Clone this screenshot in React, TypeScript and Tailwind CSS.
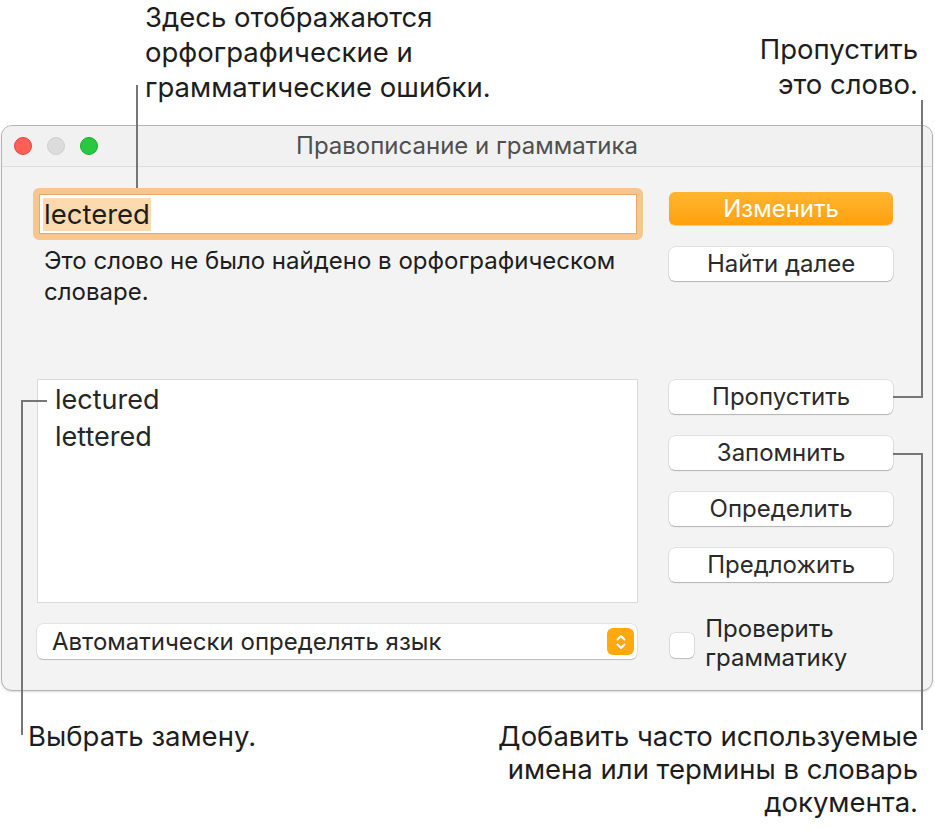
import React from "react"

const font = { fontFamily: "Inter, 'Noto Sans', sans-serif" }

function Btn({ label, primary = false }: { label: string; primary?: boolean }) {
  if (primary) {
    return (
      <div className="h-[33px] w-full rounded-[6px] bg-gradient-to-b from-[#ffb52e] to-[#ffa10a] flex items-center justify-center text-[24px] text-white shadow-[0_1px_1px_rgba(0,0,0,0.15)]">
        {label}
      </div>
    )
  }
  return (
    <div className="h-[34px] w-full rounded-[6px] bg-white flex items-center justify-center text-[24px] text-[#2b2b2b] shadow-[0_0_0_0.5px_rgba(0,0,0,0.15),0_1px_1px_rgba(0,0,0,0.2)]">
      {label}
    </div>
  )
}

export default function App() {
  return (
    <div className="relative w-[935px] h-[830px] bg-white text-[#1d1d1d]" style={font}>
      {/* top callouts */}
      <div className="flex h-[125px]">
        <div className="ml-[145px] text-[27.5px] leading-[35px] text-[#1d1d1d]">
          Здесь отображаются<br />
          орфографические и<br />
          грамматические ошибки.
        </div>
        <div className="ml-auto mr-[17px] mt-[32px] text-right text-[27.5px] leading-[35px]">
          Пропустить<br />
          это слово.
        </div>
      </div>

      {/* window */}
      <div className="ml-[1px] w-[932px] h-[566px] rounded-[11px] border border-[#b4b4b4] bg-[#f3f3f3] overflow-hidden shadow-[0_1px_2px_rgba(0,0,0,0.15)]">
        <div className="relative h-[41px] flex items-center border-b border-[#dcdcdc] bg-[#f1f1f1]">
          <div className="flex gap-[15px] ml-[12px]">
            <span className="w-[18px] h-[18px] rounded-full bg-[#fe5f57] border border-[#e2463f]" />
            <span className="w-[18px] h-[18px] rounded-full bg-[#dcdcdc] border border-[#cfcfcf]" />
            <span className="w-[18px] h-[18px] rounded-full bg-[#28c840] border border-[#1aab29]" />
          </div>
          <div className="absolute inset-0 flex items-center justify-center text-[24px] text-[#4f4f4f]">
            Правописание и грамматика
          </div>
        </div>

        <div className="flex pl-[31px] pr-[39px] pt-[21px] gap-[26px]">
          {/* left column */}
          <div className="w-[611px] flex flex-col">
            <div className="h-[52px] rounded-[6px] border-[6px] border-[#f6c690] p-0">
              <div className="h-full bg-white border border-[#e9a868] flex items-center pl-[3px]">
                <span className="bg-[#fdd9ae] text-[27.5px] leading-[33px] px-[1px] text-[#1d1d1d]">lectered</span>
              </div>
            </div>
            <div className="ml-[11px] mt-[5px] text-[24px] leading-[31px]">
              Это слово не было найдено в орфографическом<br />
              словаре.
            </div>
            <div className="ml-[4px] mr-[5px] mt-[72px] h-[224px] bg-white border border-[#dadada] pt-[1px] pl-[17px] text-[27px] leading-[37px] text-[#262626]">
              <div>lectured</div>
              <div>lettered</div>
            </div>
            <div className="ml-[4px] mr-[6px] mt-[21px] h-[35px] rounded-[6px] bg-white flex items-center pl-[15px] pr-[3px] text-[24px] text-[#262626] shadow-[0_0_0_0.5px_rgba(0,0,0,0.12),0_1px_1px_rgba(0,0,0,0.18)]">
              <span>Автоматически определять язык</span>
              <div className="ml-auto w-[27px] h-[27px] rounded-[6px] bg-[#ffa80f] flex items-center justify-center">
                <svg width="12" height="18" viewBox="0 0 12 18" fill="none" stroke="white" strokeWidth="2" strokeLinecap="round" strokeLinejoin="round">
                  <path d="M2.5 6.5 L6 3 L9.5 6.5" />
                  <path d="M2.5 11.5 L6 15 L9.5 11.5" />
                </svg>
              </div>
            </div>
          </div>

          {/* right column */}
          <div className="w-[224px] flex flex-col">
            <div className="mt-[4px]"><Btn label="Изменить" primary /></div>
            <div className="mt-[22px]"><Btn label="Найти далее" /></div>
            <div className="mt-[99px]"><Btn label="Пропустить" /></div>
            <div className="mt-[22px]"><Btn label="Запомнить" /></div>
            <div className="mt-[22px]"><Btn label="Определить" /></div>
            <div className="mt-[22px]"><Btn label="Предложить" /></div>
            <div className="mt-[36px] flex items-center gap-[11px] ml-[1px]">
              <span className="w-[24px] h-[25px] rounded-[5px] bg-white shadow-[0_0_0_0.5px_rgba(0,0,0,0.18),0_1px_1px_rgba(0,0,0,0.15)]" />
              <div className="text-[24px] leading-[29px] text-[#262626] -mt-[4px]">
                Проверить<br />
                грамматику
              </div>
            </div>
          </div>
        </div>
      </div>

      {/* bottom callouts */}
      <div className="flex mt-[29px]">
        <div className="ml-[28px] text-[27.5px] leading-[33px]">Выбрать замену.</div>
        <div className="ml-auto mr-[17px] text-right text-[27.5px] leading-[33px]">
          Добавить часто используемые<br />
          имена или термины в словарь<br />
          документа.
        </div>
      </div>

      {/* leader lines */}
      <svg className="absolute inset-0 pointer-events-none" width="935" height="830" fill="none" stroke="#767676" strokeWidth="2">
        <path d="M137 85 V188" />
        <path d="M893 397 H922 V100" />
        <path d="M893 454 H922 V730" />
        <path d="M47 401 H22 V735" />
      </svg>
    </div>
  )
}
